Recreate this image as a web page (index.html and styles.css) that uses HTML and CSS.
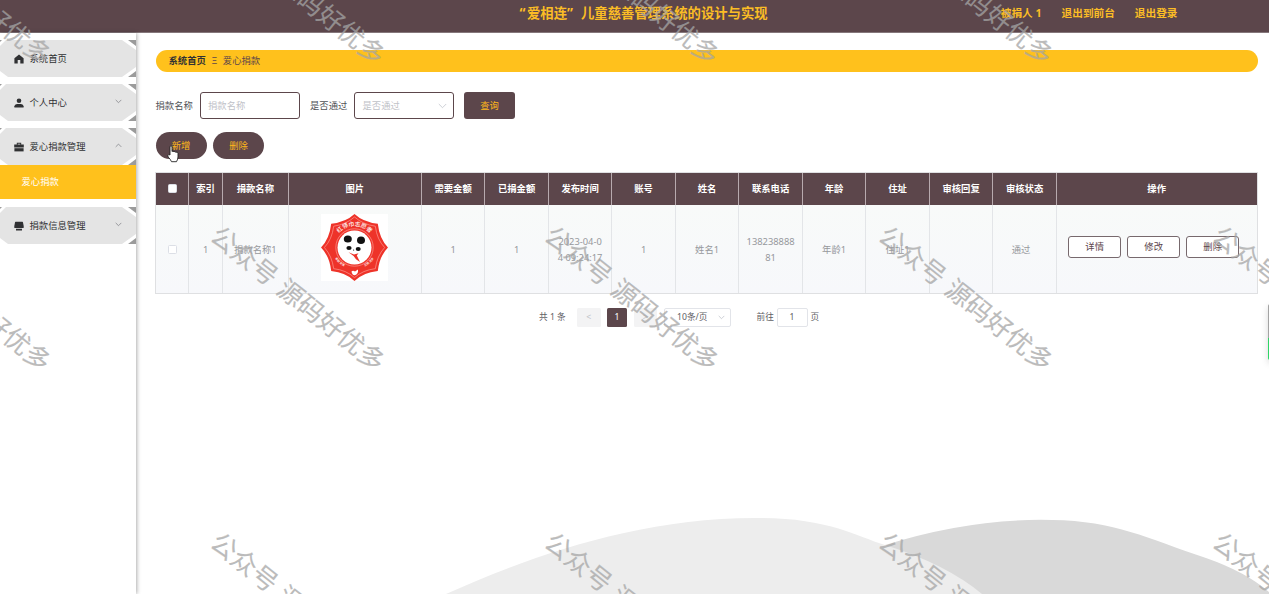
FILE: index.html
```html
<!DOCTYPE html>
<html lang="zh-CN">
<head>
<meta charset="utf-8">
<title>“爱相连”儿童慈善管理系统的设计与实现</title>
<link rel="stylesheet" href="styles.css">
</head>
<body>
<header class="topbar">
  <h1 class="title"><span class="quote">“</span>爱相连<span class="quote close">”</span>儿童慈善管理系统的设计与实现</h1>
  <nav class="topnav"><span>被捐人 1</span><span>退出到前台</span><span>退出登录</span></nav>
</header>
<div class="layout">
  <aside class="sidebar">
    <div class="item"><svg class="icon" viewBox="0 0 10 10"><path d="M5 .4 9.6 4.2V9.6H6.3V6.1H3.7V9.6H.4V4.2z"/></svg><span>系统首页</span></div>
    <div class="item"><svg class="icon" viewBox="0 0 10 10"><circle cx="5" cy="2.8" r="2.3"/><path d="M.4 9.5V8.2Q.6 6 3 5.9H7Q9.4 6 9.6 8.2V9.5z"/></svg><span>个人中心</span><svg class="arrow" viewBox="0 0 7 5"><path d="M.7.9 3.5 3.7 6.3.9"/></svg></div>
    <div class="item open"><svg class="icon" viewBox="0 0 10 10"><path d="M.2 2.6H2.8V.8H7.2V2.6H9.8V5.4H.2zM3.7 2.6H6.3V1.7H3.7z" fill-rule="evenodd"/><path d="M.4 6.2H9.6V9.4H.4z"/></svg><span>爱心捐款管理</span><svg class="arrow" viewBox="0 0 7 5"><path d="M.7 3.9 3.5 1.1 6.3 3.9"/></svg></div>
    <div class="submenu">爱心捐款</div>
    <div class="item"><svg class="icon" viewBox="0 0 10 10"><path d="M1.6.8H8.4Q9 .8 9 1.5L9.7 5V6.4Q9.7 7 9 7H1Q.3 7 .3 6.4V5L1 1.5Q1 .8 1.6.8zM2 7.7H8V9.4H2z"/></svg><span>捐款信息管理</span><svg class="arrow" viewBox="0 0 7 5"><path d="M.7.9 3.5 3.7 6.3.9"/></svg></div>
  </aside>
  <main class="main">
    <svg class="hills" viewBox="0 0 1133 80"><path fill="#d9d9d9" d="M749 31Q835 4 916 6C980 7 1010 24 1070 44Q1110 58 1133 78V80H740z"/><path fill="#ededed" d="M310 80C390 44 500 4 619 4C690 3 720 22 749 31Q810 50 846 80z"/></svg>
    <div class="crumb"><b>系统首页</b><i>Ξ</i><span>爱心捐款</span></div>
    <div class="filters">
      <label>捐款名称</label><div class="field">捐款名称</div>
      <label class="second">是否通过</label><div class="field">是否通过<svg class="arrow" viewBox="0 0 9 6"><path d="M.8 1 4.5 4.7 8.2 1"/></svg></div>
      <button class="search">查询</button>
    </div>
    <div class="actions"><button>新增</button><button>删除</button></div>
    <div class="table">
      <div class="row head">
        <div><i class="check"></i></div><div>索引</div><div>捐款名称</div><div>图片</div><div>需要金额</div><div>已捐金额</div><div>发布时间</div><div>账号</div><div>姓名</div><div>联系电话</div><div>年龄</div><div>住址</div><div>审核回复</div><div>审核状态</div><div>操作</div>
      </div>
      <div class="row body">
        <div><i class="check"></i></div><div>1</div><div>捐款名称1</div>
        <div><svg class="badge" viewBox="0 0 67 67">
          <defs><path id="top" d="M14.6 24A21 21 0 0 1 52.4 24"/><path id="bottom" d="M11 38A23.5 23.5 0 0 0 56 38"/></defs>
          <path fill="#fff" d="M0 0H67V67H0z"/>
          <path fill="#ee3329" d="M33.5 0Q42 8 56.8 9.8Q58.5 25 67 33.5Q58.5 42 56.8 57Q42 58.5 33.5 67Q25 58.5 10.2 57Q8.5 42 0 33.5Q8.5 25 10.2 9.8Q25 8 33.5 0z"/>
          <path fill="none" stroke="#ffaaa2" stroke-width=".6" d="M33.5 3Q42 10.5 54.3 12.2Q56 25.5 63.6 33.5Q56 42 54.3 54.7Q42 56 33.5 63.6Q25 56 12.7 54.7Q11 42 3.4 33.5Q11 25.5 12.7 12.2Q25 10.5 33.5 3z"/>
          <circle cx="33.5" cy="33.5" r="18.7" fill="none" stroke="#ffaaa2" stroke-width=".6"/>
          <circle cx="33.5" cy="33.5" r="17" fill="#fff"/>
          <g fill="#111"><ellipse cx="26.8" cy="25" rx="4" ry="3.6"/><ellipse cx="40" cy="26.2" rx="4" ry="3.8"/><ellipse cx="28" cy="34" rx="2.6" ry="2"/><ellipse cx="37.2" cy="35" rx="2.5" ry="2"/><circle cx="32.6" cy="36" r=".6"/></g>
          <path fill="#ee3329" d="M27.5 38.3 33 40.4 37.5 39.2 35.8 41.6 39 48 35 45.3 32.6 42z"/>
          <path fill="#fff" d="M30.5 57.5Q32 55.8 34 57.6L37 55.5Q37.5 60 33.8 61.2Q31 61 30.5 57.5z"/>
          <text class="arc"><textPath href="#top" startOffset="50%">红领巾志愿者</textPath></text>
          <text class="arc small"><textPath href="#bottom" startOffset="22%">奉献 友爱</textPath></text>
          <text class="arc small"><textPath href="#bottom" startOffset="78%">互助 进步</textPath></text>
        </svg></div>
        <div>1</div><div>1</div><div>2023-04-0<br>4 09:24:17</div><div>1</div><div>姓名1</div><div>138238888<br>81</div><div>年龄1</div><div>住址1</div><div></div><div class="state">通过</div>
        <div class="ops"><button>详情</button><button>修改</button><button>删除</button></div>
      </div>
    </div>
    <div class="pager">
      <span class="total">共 1 条</span><span class="page prev">&lt;</span><span class="page current">1</span><span class="page next">&gt;</span>
      <span class="size">10条/页<svg class="arrow" viewBox="0 0 7 5"><path d="M.7.9 3.5 3.7 6.3.9"/></svg></span>
      <span class="goto">前往</span><span class="jump">1</span><span>页</span>
    </div>
  </main>
</div>
<div class="side-widget"></div>
<svg class="cursor" viewBox="0 0 12 18"><path fill="#fff" stroke="#222" stroke-width=".9" stroke-linejoin="round" d="M3 10V2Q3 .8 4 .8T5 2V6.5Q5.5 5.8 7 6.6 8.2 6.2 8.7 7.2 10.8 6.6 11 8.5V12Q11 14 9.5 16.7H4.5Q3.5 14.3 1.2 12 .2 10.3 1.5 9.8 2.3 9.6 3 10z"/></svg>
<svg class="watermark" viewBox="0 0 1269 594">
  <defs><text id="mark" text-anchor="middle" y="9.5">公众号 源码好优多</text></defs>
  <use href="#mark" transform="translate(-36 -8) rotate(38.6)"/><use href="#mark" transform="translate(298 -8) rotate(38.6)"/><use href="#mark" transform="translate(632 -8) rotate(38.6)"/><use href="#mark" transform="translate(966 -8) rotate(38.6)"/>
  <use href="#mark" transform="translate(-36 298.5) rotate(38.6)"/><use href="#mark" transform="translate(298 298.5) rotate(38.6)"/><use href="#mark" transform="translate(632 298.5) rotate(38.6)"/><use href="#mark" transform="translate(966 298.5) rotate(38.6)"/><use href="#mark" transform="translate(1300 298.5) rotate(38.6)"/>
  <use href="#mark" transform="translate(298 605) rotate(38.6)"/><use href="#mark" transform="translate(632 605) rotate(38.6)"/><use href="#mark" transform="translate(966 605) rotate(38.6)"/><use href="#mark" transform="translate(1300 605) rotate(38.6)"/>
</svg>
</body>
</html>
```
FILE: styles.css
```css
* { box-sizing: border-box; }
body {
  margin: 0;
  height: 594px;
  position: relative;
  overflow: hidden;
  display: flex;
  flex-direction: column;
  background: #fff;
  color: #5f6165;
  font: 9.33px/16px "Noto Sans", "Noto Sans CJK SC", sans-serif;
}
button { font: inherit; padding: 0; margin: 0; border: 0; }
i { font-style: normal; }
.topbar {
  flex: 0 0 33px;
  display: flex;
  justify-content: space-between;
  padding: 0 91.5px 0 518px;
  background: #5c464b;
  border-bottom: 1px solid #85777b;
  color: #fbbd25;
}
.title { margin: 0; font-size: 13.33px; line-height: 27px; font-weight: 700; white-space: nowrap; }
.quote { display: inline-block; width: 9px; text-align: center; }
.quote.close { width: 14px; text-align: left; }
.topnav { display: flex; gap: 20px; font-size: 10.67px; line-height: 26px; font-weight: 700; }
.layout { flex: 1; display: flex; min-height: 0; }
.sidebar {
  flex: 0 0 136px;
  padding-top: 7px;
  background: #fff;
  box-shadow: 1px 0 4px rgba(0, 0, 0, .32);
  z-index: 1;
}
.item {
  position: relative;
  z-index: 0;
  height: 37px;
  margin-bottom: 7px;
  display: flex;
  align-items: center;
  padding: 0 14px;
  color: #303133;
}
.item::before, .item::after { content: ""; position: absolute; inset: 0; z-index: -1; }
.item::before {
  background: #e4e4e4;
  clip-path: polygon(6px 0, 122px 0, 136px 10px, 136px 27px, 122px 37px, 8px 37px, 0 31px, 0 6px);
}
.item::after {
  background: #9b9b9b;
  clip-path: polygon(128px 0, 136px 0, 136px 6px, 128px 0, 2px 0, 0 0, 0 2px, 2px 0, 128px 0, 136px 31px, 136px 37px, 128px 37px, 136px 31px, 128px 0);
}
.item.open { margin-bottom: 0; }
.icon { width: 10px; height: 10px; margin-right: 5.5px; fill: #303133; }
.arrow { fill: none; stroke: #a4a6aa; stroke-width: .8; }
.item .arrow { width: 7px; height: 5px; margin-left: auto; margin-bottom: 3px; stroke: #85878b; }
.submenu {
  height: 34px;
  line-height: 34px;
  padding-left: 21.5px;
  margin-bottom: 8px;
  background: #ffc11c;
  color: #fff;
}
.main { flex: 1; position: relative; padding: 16.5px 11.5px 0 19.5px; z-index: 0; }
.hills { position: absolute; left: 0; bottom: 0; width: 1133px; height: 80px; z-index: -1; }
.crumb {
  display: flex;
  align-items: center;
  height: 22.5px;
  padding-left: 13px;
  border-radius: 12px;
  background: #ffc11c;
  color: #5c464b;
}
.crumb b { color: #303133; font-weight: 600; }
.crumb i { width: 17px; text-align: center; }
.filters { display: flex; align-items: center; height: 27px; margin-top: 20px; }
.filters label { width: 44px; color: #505257; }
.filters .second { margin-left: 10.5px; width: 44px; }
.field {
  display: flex;
  align-items: center;
  justify-content: space-between;
  width: 100px;
  height: 27px;
  padding: 0 6px 0 7.5px;
  border: 1.5px solid #5c464b;
  border-radius: 3px;
  background: #fff;
  color: #bfc2c8;
}
.field .arrow { width: 9px; height: 6px; stroke: #c0c4cc; }
.search { width: 51px; height: 27px; margin-left: 10px; border-radius: 3px; background: #5c464b; color: #ffb81a; }
.actions { display: flex; gap: 6.5px; margin-top: 13px; }
.actions button { width: 51px; height: 27px; border-radius: 14px; background: #5c464b; color: #ffb81a; }
.table { margin: 12.5px 0 0 -.2px; border: 1px solid #dfe0e2; }
.row {
  display: grid;
  grid-template-columns: 33px 33.5px 66px 133px 63.5px 63.5px 63.5px 63.5px 63.5px 63.5px 63.5px 63.5px 63.5px 63.5px 1fr;
}
.row > div { display: flex; align-items: center; justify-content: center; text-align: center; border-right: 1px solid #e3e5e8; }
.row > div:last-child { border-right: 0; }
.head { height: 32px; background: #5c464b; color: #fff; font-weight: 700; }
.head > div { border-color: #b8aaae; }
.body { height: 88.5px; background: linear-gradient(#f8faf9, #f7f8fb); color: #96989c; }
.body > div { padding-top: 1.5px; }
.check { width: 9.5px; height: 9.5px; border: 1px solid #dcdfe6; border-radius: 1.5px; background: #fff; }
.badge { width: 67px; height: 67px; margin-bottom: 5px; }
.arc { fill: #fff; font-size: 5.8px; text-anchor: middle; font-weight: 500; }
.arc.small { font-size: 2.9px; }
.row .state { padding-right: 7px; }
.row .ops { gap: 6.5px; padding: 0 6px 3px 0; }
.ops button { width: 52.5px; height: 22px; border: 1px solid #77696d; border-radius: 3px; background: #fff; color: #5c464b; }
.pager { display: flex; align-items: center; height: 20px; margin: 13.2px 0 0 383.5px; font-size: 8.67px; line-height: 19px; }
.total { width: 38px; }
.page { height: 19px; border-radius: 1.5px; text-align: center; background: #f3f3f4; color: #bfc2c8; }
.prev, .next { width: 23.5px; }
.page.current { width: 20px; margin: 0 6.5px; background: #5c464b; color: #fff; }
.size { display: flex; align-items: center; justify-content: space-between; width: 67px; height: 19px; margin-left: 6.5px; padding: 0 5px 0 12.5px; border: 1px solid #e2e4e9; border-radius: 2px; }
.size .arrow { width: 7px; height: 5px; stroke: #c0c4cc; }
.goto { margin-left: 26px; width: 20px; }
.jump { width: 31px; height: 19px; line-height: 17px; margin-right: 3px; border: 1px solid #e2e4e9; border-radius: 2px; text-align: center; }
.side-widget {
  position: absolute;
  left: 1267.6px;
  top: 304px;
  width: 10px;
  height: 56px;
  border-radius: 2px;
  background: linear-gradient(#a3a3a3 34px, #2fd566 34px);
  box-shadow: 0 3px 7px rgba(0, 0, 0, .15);
}
.cursor { position: absolute; left: 167px; top: 145px; width: 12px; height: 18px; z-index: 2; }
.watermark {
  position: absolute;
  inset: 0;
  width: 1269px;
  height: 594px;
  z-index: 3;
  pointer-events: none;
  fill: #a5a5a5;
  opacity: .75;
  stroke: #a5a5a5;
  stroke-width: .1;
  font: 25.8px "Noto Sans CJK SC", sans-serif;
  word-spacing: 2px;
}
```
